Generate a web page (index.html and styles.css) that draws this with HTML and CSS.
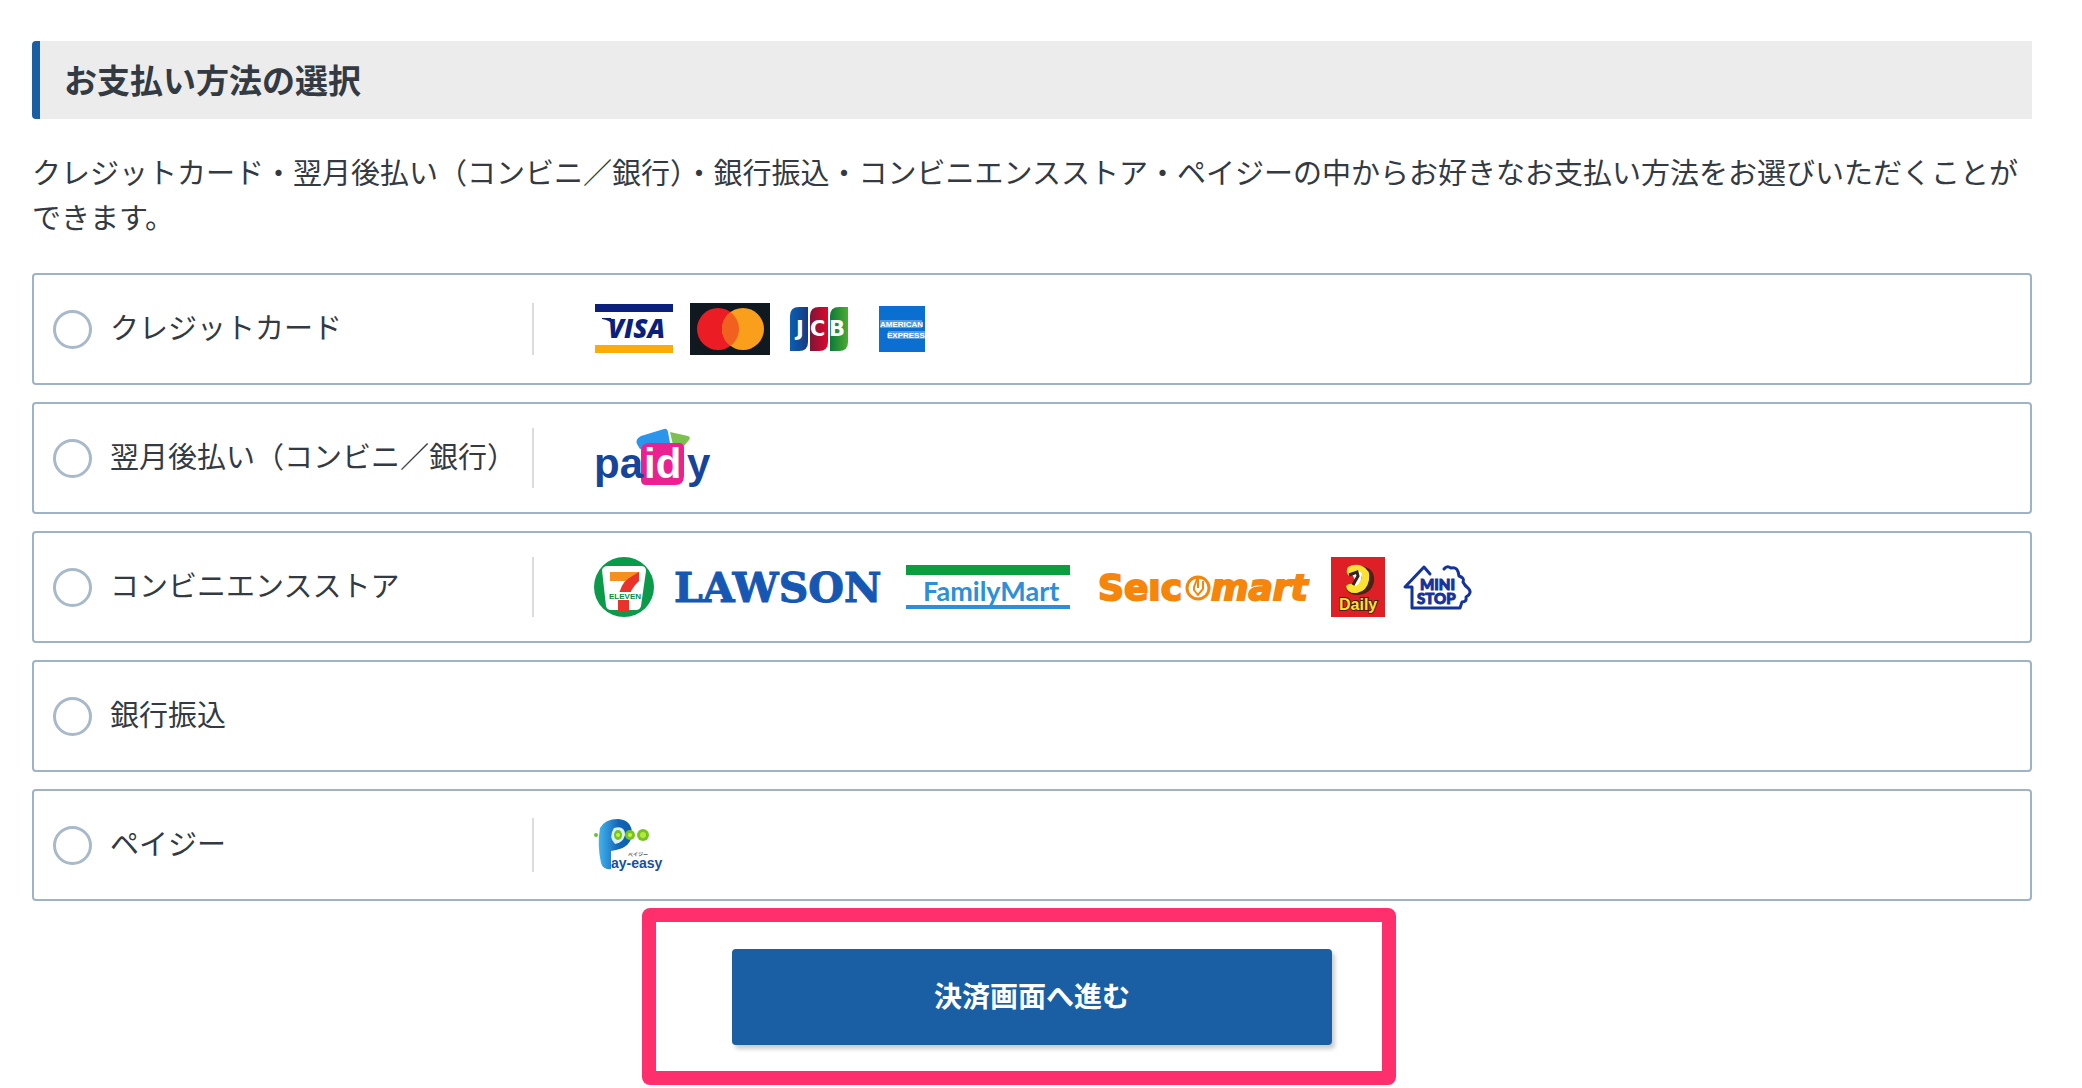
FILE: index.html
```html
<!DOCTYPE html>
<html lang="ja">
<head>
<meta charset="utf-8">
<meta name="viewport" content="width=device-width, initial-scale=1">
<title>お支払い方法の選択</title>
<link rel="stylesheet" href="styles.css">
</head>
<body>
<main class="page">
  <h1 class="heading">お支払い方法の選択</h1>
  <p class="lead">クレジットカード・翌月後払い（コンビニ／銀行）・銀行振込・コンビニエンスストア・ペイジーの中からお好きなお支払い方法をお選びいただくことができます。</p>
  <form class="form">
    <div class="methods">
      <label class="method">
        <input class="radio" type="radio" name="payment" value="card">
        <span class="name">クレジットカード</span>
        <span class="logos">
          <svg width="80" height="52" viewBox="0 0 80 52" role="img" aria-label="VISA">
            <rect x="1" y="1" width="78" height="8" fill="#0b1f7c"/>
            <rect x="1" y="42" width="78" height="8" fill="#fbab0a"/>
            <path d="M8 15H17L20 22Q15 17 8 16Z" fill="#0b1f7c"/>
            <text class="visa" x="14" y="35">VISA</text>
          </svg>
          <svg width="80" height="52" viewBox="0 0 80 52" role="img" aria-label="Mastercard">
            <rect width="80" height="52" fill="#101820"/>
            <circle cx="28" cy="26" r="21" fill="#eb1c24"/>
            <circle cx="53" cy="26" r="21" fill="#f99f1b"/>
            <path d="M40.500 9.100A21 21 0 0 1 40.500 42.900A21 21 0 0 1 40.500 9.100Z" fill="#f2601f"/>
          </svg>
          <svg width="66" height="52" viewBox="0 0 66 52" role="img" aria-label="JCB">
            <defs>
              <linearGradient id="jb"><stop offset="0" stop-color="#0a5fb4"/><stop offset="1" stop-color="#173a80"/></linearGradient>
              <linearGradient id="jr"><stop offset="0" stop-color="#7c1638"/><stop offset="1" stop-color="#e2062c"/></linearGradient>
              <linearGradient id="jg"><stop offset="0" stop-color="#0b7a38"/><stop offset="1" stop-color="#4bad32"/></linearGradient>
            </defs>
            <path d="M4 13Q4 4 13 4H22V39Q22 48 13 48H4Z" fill="url(#jb)"/>
            <path d="M24 13Q24 4 33 4H42V39Q42 48 33 48H24Z" fill="url(#jr)"/>
            <path d="M44 13Q44 4 53 4H62V39Q62 48 53 48H44Z" fill="url(#jg)"/>
            <text class="jcb" x="10" y="33">J</text>
            <text class="jcb" x="24" y="33">C</text>
            <text class="jcb" x="43" y="33">B</text>
          </svg>
          <svg width="70" height="52" viewBox="0 0 70 52" role="img" aria-label="American Express">
            <rect x="11" y="3" width="46" height="46" fill="#0b6fd1"/>
            <rect x="12" y="17" width="42" height="8" fill="#fff" opacity=".3"/>
            <rect x="20" y="28" width="37" height="8" fill="#fff" opacity=".3"/>
            <text class="amex" x="12" y="24">AMERICAN</text>
            <text class="amex" x="19" y="35">EXPRESS</text>
          </svg>
        </span>
      </label>

      <label class="method">
        <input class="radio" type="radio" name="payment" value="paidy">
        <span class="name">翌月後払い（コンビニ／銀行）</span>
        <span class="logos">
          <svg width="122" height="60" viewBox="0 0 122 60" role="img" aria-label="paidy">
            <path d="M43 16Q41 11 47 8L70 1Q73 0 74 4L76 15L46 21Z" fill="#2b95ec"/>
            <path d="M76 4L94 8Q97 9 95 12L90 18L79 17Z" fill="#7cc050"/>
            <path d="M56 15H85Q90 15 90 20V48Q90 57 81 57H52Q47 57 47 52V23Q47 15 56 15Z" fill="#ec2191"/>
            <text class="paidy" x="0" y="50">pa</text>
            <text class="paidy paidy-id" x="50" y="50">id</text>
            <text class="paidy" x="93" y="50">y</text>
          </svg>
        </span>
      </label>

      <label class="method">
        <input class="radio" type="radio" name="payment" value="store">
        <span class="name">コンビニエンスストア</span>
        <span class="logos">
          <svg width="60" height="60" viewBox="0 0 60 60" role="img" aria-label="7-ELEVEN">
            <circle cx="30" cy="30" r="30" fill="#0a9a49"/>
            <path d="M8 13Q9 9 14 9H47Q52 9 52 14L47 49Q46 53 42 53H17Q13 53 12 49Z" fill="#fff"/>
            <path d="M16 15H46L36 24H16Z" fill="#f4911e"/>
            <path d="M45 15V24Q36 32 35 42V54H24V42Q26 27 35 21Z" fill="#e8322a"/>
            <rect x="14" y="35" width="33" height="8" fill="#fff"/>
            <text class="eleven" x="15" y="42">ELEVEN</text>
          </svg>
          <svg width="216" height="60" viewBox="0 0 216 60" role="img" aria-label="LAWSON">
            <text class="lawson" x="4" y="45">LAWSON</text>
          </svg>
          <svg width="172" height="60" viewBox="0 0 172 60" role="img" aria-label="FamilyMart">
            <rect x="4" y="8" width="164" height="10" fill="#0a9e3f"/>
            <rect x="4" y="48" width="164" height="4" fill="#2b90d9"/>
            <text class="family" x="21" y="44">FamilyMart</text>
          </svg>
          <svg width="225" height="60" viewBox="0 0 225 60" role="img" aria-label="Seicomart">
            <text class="seico" x="8" y="43">Seıc</text>
            <circle cx="108" cy="31" r="11" fill="none" stroke="#f5860b" stroke-width="3"/>
            <path d="M97 31Q98 20 108 20L104 30V33L108 38L113 32V24M108 21V31" fill="none" stroke="#f5860b" stroke-width="2"/>
            <text class="seico seico-mart" x="121" y="43">mart</text>
          </svg>
          <svg width="54" height="60" viewBox="0 0 54 60" role="img" aria-label="Daily">
            <rect width="54" height="60" fill="#df1f26"/>
            <path d="M20 9H30Q44 11 43 24Q41 37 27 38Q16 38 15 30L22 26L27 14L18 18Z" fill="#4b2015"/>
            <path d="M17 10Q24 6 31 9Q40 13 38 23Q36 34 26 36Q16 37 15 29Q19 25 24 28Q30 25 31 20Q30 14 25 14Q20 14 18 19Q14 15 17 10Z" fill="#fbe232"/>
            <path d="M20 15Q28 11 31 17Q31 25 25 29Q22 28 24 23Z" fill="#fff"/>
            <path d="M18 18L26 15L27 19L22 28" fill="none" stroke="#33231b" stroke-width="3"/>
            <text class="daily" x="8" y="53">Daily</text>
          </svg>
          <svg width="74" height="60" viewBox="0 0 74 60" role="img" aria-label="MINISTOP">
            <path d="M29 17L23 10L4 30H11V51H59L61 45Q66 45 65 40Q72 36 67 31Q64 29 62 25Q64 21 58 19Q57 9 50 11Q46 8 43 12" fill="none" stroke="#15339a" stroke-width="3" stroke-linejoin="round" stroke-linecap="round"/>
            <text class="mini" x="19" y="33">MINI</text>
            <text class="mini" x="16" y="47">STOP</text>
          </svg>
        </span>
      </label>

      <label class="method">
        <input class="radio" type="radio" name="payment" value="bank">
        <span class="name">銀行振込</span>
      </label>

      <label class="method">
        <input class="radio" type="radio" name="payment" value="payeasy">
        <span class="name">ペイジー</span>
        <span class="logos">
          <svg width="74" height="54" viewBox="0 0 74 54" role="img" aria-label="Pay-easy">
            <defs><linearGradient id="pe"><stop offset="0" stop-color="#42b5ed"/><stop offset=".6" stop-color="#1264b8"/><stop offset="1" stop-color="#0c5ea9"/></linearGradient></defs>
            <path d="M6 10Q11 1 24 1Q38 2 38 16Q37 29 22 32L17 33V51Q9 52 7 45Q3 27 6 10Z" fill="url(#pe)"/>
            <path d="M20 10Q31 7 31 17Q29 25 21 26Q14 19 20 10Z" fill="#d8f0fa"/>
            <circle cx="2" cy="17" r="2" fill="#6fc02c"/>
            <ellipse cx="24" cy="17" rx="4" ry="5" fill="#75c51f"/>
            <circle cx="36" cy="17" r="5" fill="#75c51f"/>
            <circle cx="49" cy="17" r="6" fill="#75c51f"/>
            <circle cx="24" cy="17" r="2" fill="#c8f04a"/>
            <circle cx="36" cy="17" r="2" fill="#c8f04a"/>
            <circle cx="49" cy="17" r="3" fill="#b5e83c"/>
            <text class="kana" x="34" y="38">ペイジー</text>
            <text class="payeasy" x="17" y="50">ay-easy</text>
          </svg>
        </span>
      </label>
    </div>
    <div class="actions">
      <button class="submit" type="button">決済画面へ進む</button>
    </div>
  </form>
</main>
</body>
</html>
```
FILE: styles.css
```css
* {
  box-sizing: border-box;
}

body {
  margin: 0;
  background: #fff;
  color: #333a42;
  font-family: "Noto Sans CJK JP", sans-serif;
  font-size: 29px;
  line-height: 45px;
}

.page {
  padding: 41px 50px 42px 32px;
}

.heading {
  margin: 0;
  padding: 14px 24px 16px;
  border-left: 8px solid #1a5fa3;
  border-radius: 4px 0 0 4px;
  background: #ececec;
  font-size: 33px;
  line-height: 48px;
}

.lead {
  margin: 30px 0 34px;
}

.methods {
  display: flex;
  flex-direction: column;
  gap: 17px;
}

.method {
  display: flex;
  align-items: center;
  min-height: 112px;
  padding: 0 19px;
  border: 2px solid #9fb3c6;
  border-radius: 4px;
  cursor: pointer;
}

.radio {
  flex: none;
  appearance: none;
  width: 39px;
  height: 39px;
  margin: 0 18px 0 0;
  border: 3px solid #a8bac9;
  border-radius: 50%;
  background: #fff;
}

.radio:checked {
  background: radial-gradient(#1a5fa3 50%, #fff 55%);
}

.name {
  flex: 0 0 422px;
  padding-bottom: 6px;
}

.logos {
  display: flex;
  flex-wrap: wrap;
  align-items: center;
  gap: 16px;
  padding-left: 60px;
  border-left: 2px solid #dadcde;
}

.logos svg {
  display: block;
}

.actions {
  position: relative;
  width: 600px;
  max-width: 100%;
  margin: 48px auto 0;
}

.actions::after {
  content: "";
  position: absolute;
  inset: -41px -64px -40px -90px;
  border: 14px solid #ff2f6e;
  border-radius: 8px;
  pointer-events: none;
}

.submit {
  display: block;
  width: 100%;
  height: 96px;
  padding: 0 24px 4px;
  border: 0;
  border-radius: 4px;
  background: #1a5fa3;
  box-shadow: 3px 4px 4px rgba(0, 0, 0, 0.2);
  color: #fff;
  font: bold 28px/42px "Noto Sans CJK JP", sans-serif;
  cursor: pointer;
}

.visa {
  fill: #0b1f7c;
  font: italic 800 26px "Open Sans", sans-serif;
}

.jcb {
  fill: #fff;
  font: bold 21px "DejaVu Sans", sans-serif;
}

.amex {
  fill: #fff;
  font: bold 8px "Liberation Sans", sans-serif;
}

.paidy {
  fill: #17449b;
  font: bold 42px "Liberation Sans", sans-serif;
}

.paidy-id {
  fill: #fff;
}

.eleven {
  fill: #0a8a45;
  font: bold 8px "Liberation Sans", sans-serif;
}

.lawson {
  fill: #1757b4;
  stroke: #1757b4;
  stroke-width: 1px;
  font: bold 41px "DejaVu Serif", serif;
}

.family {
  fill: #2b90d9;
  font: bold 27px Lato, sans-serif;
}

.seico {
  fill: #f5860b;
  stroke: #f5860b;
  stroke-width: 2px;
  font: bold 36px "DejaVu Sans", sans-serif;
}

.seico-mart {
  font-style: italic;
}

.daily {
  fill: #fbe232;
  stroke: #4b2015;
  stroke-width: 2px;
  paint-order: stroke;
  font: bold 16px "Liberation Sans", sans-serif;
}

.mini {
  fill: #15339a;
  stroke: #15339a;
  stroke-width: 1px;
  font: 900 15px Lato, sans-serif;
}

.kana {
  fill: #555;
  font: bold 5px "Noto Sans CJK JP", sans-serif;
}

.payeasy {
  fill: #174fa0;
  font: bold 14px "Liberation Sans", sans-serif;
}
```
